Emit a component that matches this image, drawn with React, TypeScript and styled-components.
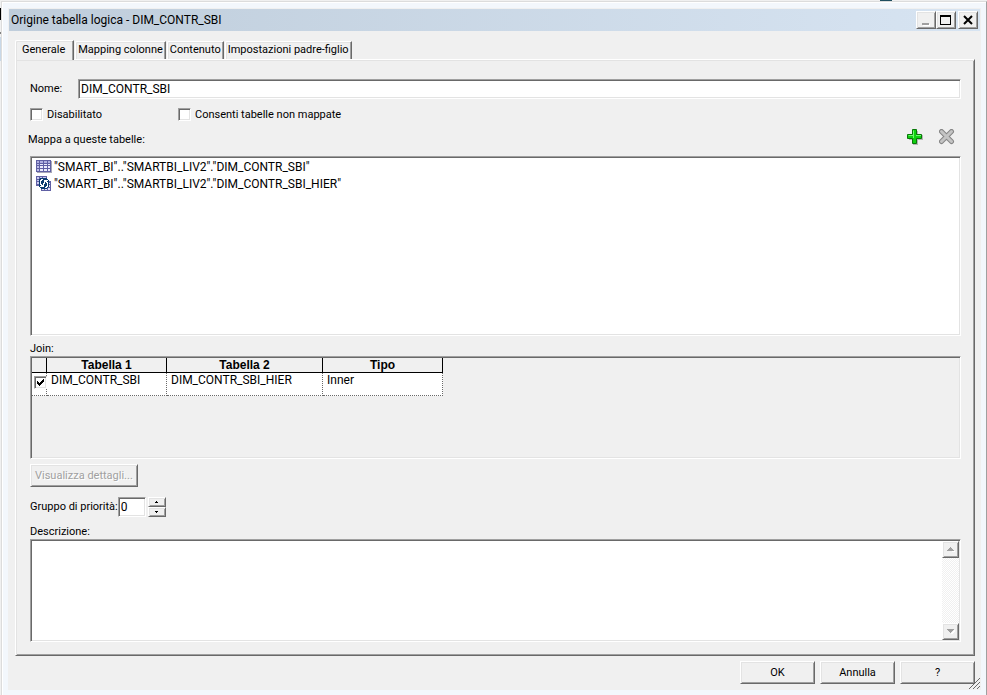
import React, { useState } from "react";
import styled, { createGlobalStyle, css } from "styled-components";

const GlobalStyle = createGlobalStyle`
  *, *::before, *::after { box-sizing: border-box; }
  html, body { margin: 0; padding: 0; background: #f0f0f0; }
  body, button, input, textarea { font-family: Roboto, "Liberation Sans", Arial, sans-serif; font-size: 11px; line-height: 14px; color: #000; }
  button, input, textarea { margin: 0; border-radius: 0; }
`;

const raised = css`
  border: 1px solid;
  border-color: #fff #696969 #696969 #fff;
  box-shadow: inset 1px 1px 0 #e3e3e3, inset -1px -1px 0 #a0a0a0;
`;

const sunken = css`
  border: 1px solid;
  border-color: #a0a0a0 #fff #fff #a0a0a0;
  box-shadow: inset 1px 1px 0 #696969, inset -1px -1px 0 #e3e3e3;
`;

const Desktop = styled.div`
  display: flex;
  min-height: 100vh;
  padding: 1px 0 0 1px;
  background:
    linear-gradient(#000, #000) 0 8px / 1px 12px no-repeat,
    linear-gradient(#808080, #808080) 0 32px / 1px 2px no-repeat,
    linear-gradient(#c8d8e8, #c8d8e8) 0 37px / 1px 24px no-repeat,
    linear-gradient(#1f4e5f, #1f4e5f) calc(100% - 95px) 0 / 12px 1px no-repeat,
    #f0f0f0;
`;

const WindowFrame = styled.div`
  flex: 1;
  display: flex;
  min-width: 0;
  padding: 6px 5px 5px 6px;
  background: #f3f7fc;
  border: 1px solid #dcdcdc;
  border-right-color: #a0a0a0;
  border-bottom: 0;
  box-shadow: inset 1px 1px 0 #fff;
`;

const Dialog = styled.main`
  position: relative;
  flex: 1;
  display: flex;
  flex-direction: column;
  min-width: 0;
  padding: 1px 1px 6px;
  background: #f0f0f0;
`;

const TitleBar = styled.header`
  display: flex;
  align-items: center;
  justify-content: space-between;
  height: 22px;
  padding: 0 2px;
  background: linear-gradient(90deg, #bfcddb, #d7e4f2);
`;

const Title = styled.h1`
  margin: 0;
  font: 400 12px/16px Roboto, "Segoe UI", sans-serif;
`;

const WindowButtons = styled.div`
  display: flex;
`;

const WindowButton = styled.button<{ $gap?: boolean }>`
  ${raised}
  display: grid;
  place-items: center;
  width: 20px;
  height: 18px;
  margin-left: ${(p) => (p.$gap ? 2 : 0)}px;
  padding: 0;
  background: #f0f0f0;
`;

const Tabs = styled.div`
  display: flex;
  align-items: flex-end;
  margin: 9px 0 0 6px;
  height: 19px;
`;

const Tab = styled.button<{ $active?: boolean }>`
  height: ${(p) => (p.$active ? 20 : 18)}px;
  margin: 0 1px ${(p) => (p.$active ? -1 : 0)}px 0;
  padding: 0 ${(p) => (p.$active ? 8 : 2)}px 2px ${(p) => (p.$active ? 6 : 2)}px;
  z-index: ${(p) => (p.$active ? 1 : 0)};
  background: #f0f0f0;
  border: 1px solid;
  border-color: #fff #696969 transparent #fff;
  border-bottom: 0;
  border-top-left-radius: 2px;
  box-shadow: inset -1px 0 0 #a0a0a0, inset 1px 1px 0 #e3e3e3;
  white-space: nowrap;
`;

const Panel = styled.section`
  ${raised}
  flex: 1;
  display: flex;
  flex-direction: column;
  margin: 0 5px 0 6px;
  padding: 19px 13px 13px 14px;
`;

const NameRow = styled.div`
  display: flex;
  align-items: center;
`;

const NameLabel = styled.label`
  width: 48px;
`;

const TextInput = styled.input`
  ${sunken}
  flex: 1;
  min-width: 0;
  height: 20px;
  padding: 0 2px;
  background: #fff;
  font-size: 12px;
  outline: 0;
`;

const OptionsRow = styled.div`
  display: grid;
  grid-template-columns: 148px 1fr;
  margin-top: 8px;
`;

const CheckLabel = styled.label`
  display: flex;
  align-items: center;
  gap: 4px;
  height: 15px;
`;

const CheckHolder = styled.span`
  position: relative;
  display: block;
  width: 13px;
  height: 13px;
`;

const CheckInput = styled.input`
  ${sunken}
  display: block;
  appearance: none;
  width: 13px;
  height: 13px;
  background: #fff;
  & + svg { display: none; }
  &:checked + svg { display: block; }
`;

const CheckMark = styled.svg`
  position: absolute;
  inset: 3px;
  width: 7px;
  height: 7px;
  pointer-events: none;
`;

const MapHeader = styled.div`
  display: flex;
  justify-content: space-between;
  height: 34px;
  padding: 7px 6px 0 0;
`;

const MapCaption = styled.span`
  margin: 4px 0 0 -2px;
`;

const Actions = styled.div`
  display: flex;
  align-items: flex-start;
  gap: 16px;
`;

const IconButton = styled.button`
  display: block;
  width: 16px;
  height: 16px;
  padding: 0;
  border: 0;
  background: none;
  svg { display: block; }
`;

const TableList = styled.ul`
  ${sunken}
  flex: 180 0 179px;
  margin: 0;
  padding: 1px 5px;
  list-style: none;
  background: #fff;
  font-size: 12px;
`;

const TableItem = styled.li`
  display: flex;
  align-items: center;
  gap: 2px;
  height: 17px;
  svg { flex: none; }
`;

const Caption = styled.label<{ $gap?: number }>`
  display: block;
  margin: ${(p) => p.$gap ?? 6}px 0 0;
`;

const JoinBox = styled.div`
  ${sunken}
  flex: 103 0 102px;
  padding: 1px;
`;

const JoinTable = styled.table`
  border-collapse: separate;
  border-spacing: 0;
  table-layout: fixed;
  width: 411px;
  th {
    height: 15px;
    padding: 0;
    border: solid #000;
    border-width: 0 1px 1px 0;
    font: 700 12px/14px "Liberation Sans", Arial, sans-serif;
  }
  td {
    height: 23px;
    padding: 0 4px;
    vertical-align: top;
    background: #fff;
    border: dotted #696969;
    border-width: 0 1px 1px 0;
    font-size: 12px;
  }
  td:first-child { padding: 3px 0 0 2px; }
`;

const PushButton = styled.button`
  ${raised}
  align-self: flex-start;
  min-width: 75px;
  height: 23px;
  padding: 0 4px;
  background: #f0f0f0;
  &:disabled { color: #a0a0a0; text-shadow: 1px 1px 0 #fff; }
`;

const DetailsButton = styled(PushButton)`
  min-width: 107px;
  margin-top: 5px;
`;

const PriorityRow = styled.div`
  display: flex;
  align-items: center;
  margin-top: 10px;
`;

const PriorityLabel = styled.label`
  min-width: 84px;
  white-space: nowrap;
`;

const PriorityInput = styled(TextInput)`
  flex: none;
  width: 28px;
`;

const Spinner = styled.div`
  display: grid;
  width: 18px;
  margin-left: 2px;
`;

const SmallButton = styled.button<{ $size: number }>`
  ${raised}
  display: grid;
  place-items: center;
  height: ${(p) => p.$size}px;
  padding: 0;
  background: #f0f0f0;
`;

const DescriptionBox = styled.div`
  ${sunken}
  flex: 103 0 102px;
  display: flex;
  padding: 1px;
  background: #fff;
`;

const DescriptionText = styled.textarea`
  flex: 1;
  min-width: 0;
  padding: 0 2px;
  border: 0;
  outline: 0;
  resize: none;
  overflow: hidden;
  background: transparent;
`;

const ScrollTrack = styled.div`
  display: flex;
  flex-direction: column;
  justify-content: space-between;
  width: 17px;
  background: repeating-conic-gradient(#fff 0 25%, #f0f0f0 0 50%) 0 0 / 2px 2px;
`;

const Footer = styled.footer`
  display: flex;
  justify-content: flex-end;
  gap: 5px;
  margin: 5px 5px 0 0;
`;

const FooterButton = styled(PushButton)`
  width: 75px;
`;

const ResizeGrip = styled.svg`
  position: absolute;
  right: 0;
  bottom: 0;
`;

function Arrow({ up, small, disabled }: { up?: boolean; small?: boolean; disabled?: boolean }) {
  const fill = disabled ? "#a0a0a0" : "#000";
  if (small) {
    return (
      <svg width="4" height="2" viewBox="0 0 4 2" shapeRendering="crispEdges">
        <path d={up ? "M1 0h1v1h1v1H0V1h1z" : "M0 0h3v1H2v1H1V1H0z"} fill={fill} />
      </svg>
    );
  }
  return (
    <svg width="8" height="5" shapeRendering="crispEdges">
      <path d={up ? "M1 5h7V4z" : "M4 5h1l3-3V1H7z"} fill="#fff" />
      <path d={up ? "M3 0h1v1h1v1h1v1h1v1H0V3h1V2h1V1h1z" : "M0 0h7v1H6v1H5v1H4v1H3V3H2V2H1V1H0z"} fill={fill} />
    </svg>
  );
}

function Check({ id, checked, onChange, label }: { id: string; checked: boolean; onChange: () => void; label?: string }) {
  return (
    <CheckHolder>
      <CheckInput id={id} type="checkbox" checked={checked} onChange={onChange} aria-label={label} />
      <CheckMark viewBox="0 0 7 7" shapeRendering="crispEdges">
        <path d="M0 2h1v1h1v1h1V3h1V2h1V1h1V0h1v3H6v1H5v1H4v1H3v1H2V6H1V5H0z" />
      </CheckMark>
    </CheckHolder>
  );
}

function TableIcon() {
  return (
    <svg width="16" height="14" shapeRendering="crispEdges">
      <path d="M1 1h15v12H1z" fill="#a8a8b8" />
      <path d="M0 0h15v12H0z" fill="#6060a4" />
      <path d="M1 1h2v2H1zM4 1h3v2H4zM8 1h3v2H8zM12 1h2v2h-2z" fill="#b0b0e0" />
      <path d="M1 4h2v1H1zM1 6h2v2H1zM1 9h2v2H1z" fill="#c0c0ea" />
      <path d="M4 4h3v1H4zM8 4h3v1H8zM12 4h2v1h-2zM4 6h3v2H4zM8 6h3v2H8zM12 6h2v2h-2zM4 9h3v2H4zM8 9h3v2H8zM12 9h2v2h-2z" fill="#ececfc" />
    </svg>
  );
}

function AliasIcon() {
  return (
    <svg width="16" height="16" shapeRendering="crispEdges">
      <path d="M0 0h11v10H0z" fill="#6060a4" />
      <path d="M1 1h2v2H1zM4 1h2v2H4zM7 1h3v2H7zM1 4h2v1H1zM1 6h2v2H1z" fill="#c8c8ee" />
      <path d="M5 5h10v10H5z" fill="#6060a4" />
      <path d="M13 7h1v1h-1zM12 9h2v2h-2zM12 12h2v2h-2zM6 12h2v2H6zM9 12h2v2H9z" fill="#e4e4fa" />
      <path d="M4 2h7v1h1v1h1v7h-1v1h-1v1H5v-1H4v-1H3V3h1z" fill="#0c3c70" />
      <path d="M5 3h2v1H6v1H5v3h1v1h1V7h1v4H4v-1h1V9H4V4h1z" fill="#fff" />
      <path d="M8 4h4v1h-1v1h1v5h-1v1H9v-1h1v-1h1V7h-1V6H9v2H8z" fill="#fff" />
    </svg>
  );
}

function PlusIcon() {
  return (
    <svg width="16" height="16">
      <path d="M6 2h5v4h5v5h-5v5H6v-5H2V6h4z" fill="#b4b4b4" />
      <path d="M5.500.5h4v5h5v4h-5v5h-4v-5h-5v-4h5z" fill="#10d010" stroke="#087808" />
      <path d="M6.500 9V1.500M1.500 6.500h5M9 6.500h5" stroke="#70f870" fill="none" />
    </svg>
  );
}

function CrossIcon() {
  return (
    <svg width="16" height="16">
      <path d="M2.500 2.500l10 10M12.500 2.500l-10 10" stroke="#858585" strokeWidth="5" strokeLinecap="round" />
      <path d="M2.500 2.500l10 10M12.500 2.500l-10 10" stroke="#c4c4c4" strokeWidth="3" strokeLinecap="round" />
    </svg>
  );
}

const tabs = ["Generale", "Mapping colonne", "Contenuto", "Impostazioni padre-figlio"];

export default function App() {
  const [tab, setTab] = useState(0);
  const [disabled, setDisabled] = useState(false);
  const [unmapped, setUnmapped] = useState(false);
  const [joined, setJoined] = useState(true);
  const [name, setName] = useState("DIM_CONTR_SBI");
  const [priority, setPriority] = useState(0);

  return (
    <Desktop>
      <GlobalStyle />
      <WindowFrame>
        <Dialog>
          <TitleBar>
            <Title>Origine tabella logica - DIM_CONTR_SBI</Title>
            <WindowButtons>
              <WindowButton aria-label="Riduci a icona">
                <svg width="12" height="12" shapeRendering="crispEdges"><path d="M3 10h7v2H3z" fill="#fff" /><path d="M2 9h7v2H2z" fill="#a0a0a0" /></svg>
              </WindowButton>
              <WindowButton aria-label="Ingrandisci">
                <svg width="12" height="12" shapeRendering="crispEdges"><path d="M0 1h11v10H0zM1 3v7h9V3z" fillRule="evenodd" /></svg>
              </WindowButton>
              <WindowButton $gap aria-label="Chiudi">
                <svg width="10" height="10"><path d="M1 1l8 8M9 1L1 9" stroke="#000" strokeWidth="2" /></svg>
              </WindowButton>
            </WindowButtons>
          </TitleBar>
          <Tabs role="tablist">
            {tabs.map((t, i) => (
              <Tab key={t} role="tab" aria-selected={i === tab} $active={i === tab} onClick={() => setTab(i)}>{t}</Tab>
            ))}
          </Tabs>
          <Panel>
            <NameRow>
              <NameLabel htmlFor="name">Nome:</NameLabel>
              <TextInput id="name" value={name} onChange={(e) => setName(e.target.value)} />
            </NameRow>
            <OptionsRow>
              <CheckLabel htmlFor="disabled">
                <Check id="disabled" checked={disabled} onChange={() => setDisabled(!disabled)} />
                Disabilitato
              </CheckLabel>
              <CheckLabel htmlFor="unmapped">
                <Check id="unmapped" checked={unmapped} onChange={() => setUnmapped(!unmapped)} />
                Consenti tabelle non mappate
              </CheckLabel>
            </OptionsRow>
            <MapHeader>
              <MapCaption id="map-caption">Mappa a queste tabelle:</MapCaption>
              <Actions>
                <IconButton aria-label="Aggiungi"><PlusIcon /></IconButton>
                <IconButton aria-label="Rimuovi" disabled><CrossIcon /></IconButton>
              </Actions>
            </MapHeader>
            <TableList aria-labelledby="map-caption">
              <TableItem><TableIcon />"SMART_BI".."SMARTBI_LIV2"."DIM_CONTR_SBI"</TableItem>
              <TableItem><AliasIcon />"SMART_BI".."SMARTBI_LIV2"."DIM_CONTR_SBI_HIER"</TableItem>
            </TableList>
            <Caption as="span" id="join-caption">Join:</Caption>
            <JoinBox>
              <JoinTable aria-labelledby="join-caption">
                <colgroup>
                  <col width="15" /><col width="120" /><col width="156" /><col width="120" />
                </colgroup>
                <thead>
                  <tr><th /><th>Tabella 1</th><th>Tabella 2</th><th>Tipo</th></tr>
                </thead>
                <tbody>
                  <tr>
                    <td><Check id="joined" label="Join attivo" checked={joined} onChange={() => setJoined(!joined)} /></td>
                    <td>DIM_CONTR_SBI</td>
                    <td>DIM_CONTR_SBI_HIER</td>
                    <td>Inner</td>
                  </tr>
                </tbody>
              </JoinTable>
            </JoinBox>
            <DetailsButton disabled>Visualizza dettagli...</DetailsButton>
            <PriorityRow>
              <PriorityLabel htmlFor="priority">Gruppo di priorità:</PriorityLabel>
              <PriorityInput id="priority" value={priority} onChange={(e) => setPriority(Number(e.target.value) || 0)} />
              <Spinner>
                <SmallButton $size={10} aria-label="Aumenta" onClick={() => setPriority(priority + 1)}><Arrow up small /></SmallButton>
                <SmallButton $size={10} aria-label="Diminuisci" onClick={() => setPriority(Math.max(0, priority - 1))}><Arrow small /></SmallButton>
              </Spinner>
            </PriorityRow>
            <Caption htmlFor="description" $gap={8}>Descrizione:</Caption>
            <DescriptionBox>
              <DescriptionText id="description" />
              <ScrollTrack>
                <SmallButton $size={17} disabled aria-label="Scorri su"><Arrow up disabled /></SmallButton>
                <SmallButton $size={17} disabled aria-label="Scorri giù"><Arrow disabled /></SmallButton>
              </ScrollTrack>
            </DescriptionBox>
          </Panel>
          <Footer>
            <FooterButton>OK</FooterButton>
            <FooterButton>Annulla</FooterButton>
            <FooterButton>?</FooterButton>
          </Footer>
          <ResizeGrip width="13" height="13">
            <path d="M1 12L12 1M5 12l7-7M9 12l3-3" stroke="#696969" />
          </ResizeGrip>
        </Dialog>
      </WindowFrame>
    </Desktop>
  );
}
